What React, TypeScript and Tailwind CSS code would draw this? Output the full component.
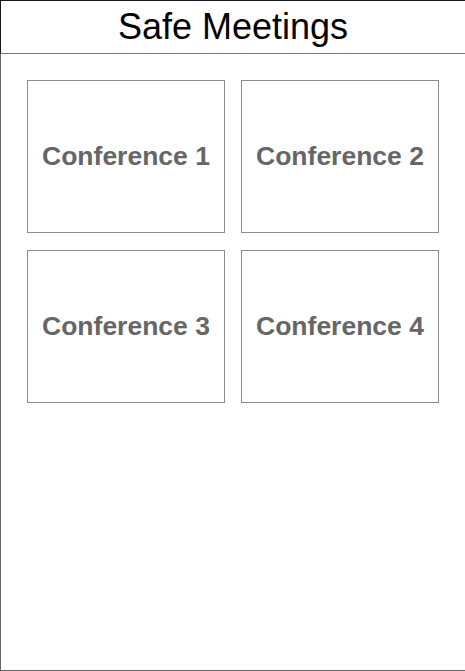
const conferences = ["Conference 1", "Conference 2", "Conference 3", "Conference 4"];

export default function App() {
  return (
    <div
      className="w-[465px] h-[671px] flex flex-col bg-white"
      style={{ fontFamily: '"Liberation Sans", Arial, sans-serif' }}
    >
      {/* Header */}
      <header className="h-[54px] shrink-0 border-t border-l border-[#1a1a1a] border-b-[#777] border-b flex items-center justify-center">
        <h1 className="text-[36px] leading-none text-black pb-[1px]">Safe Meetings</h1>
      </header>

      {/* Conference grid */}
      <main className="flex-1 border-l border-b border-[#666] pt-[26px] pl-[26px]">
        <div className="grid grid-cols-[198px_198px] gap-x-[16px] gap-y-[17px]">
          {conferences.map((name) => (
            <div
              key={name}
              className="h-[153px] border border-[#8c8c8c] flex items-center justify-center"
            >
              <span className="text-[26.5px] leading-none font-bold text-[#666]">{name}</span>
            </div>
          ))}
        </div>
      </main>
    </div>
  );
}
